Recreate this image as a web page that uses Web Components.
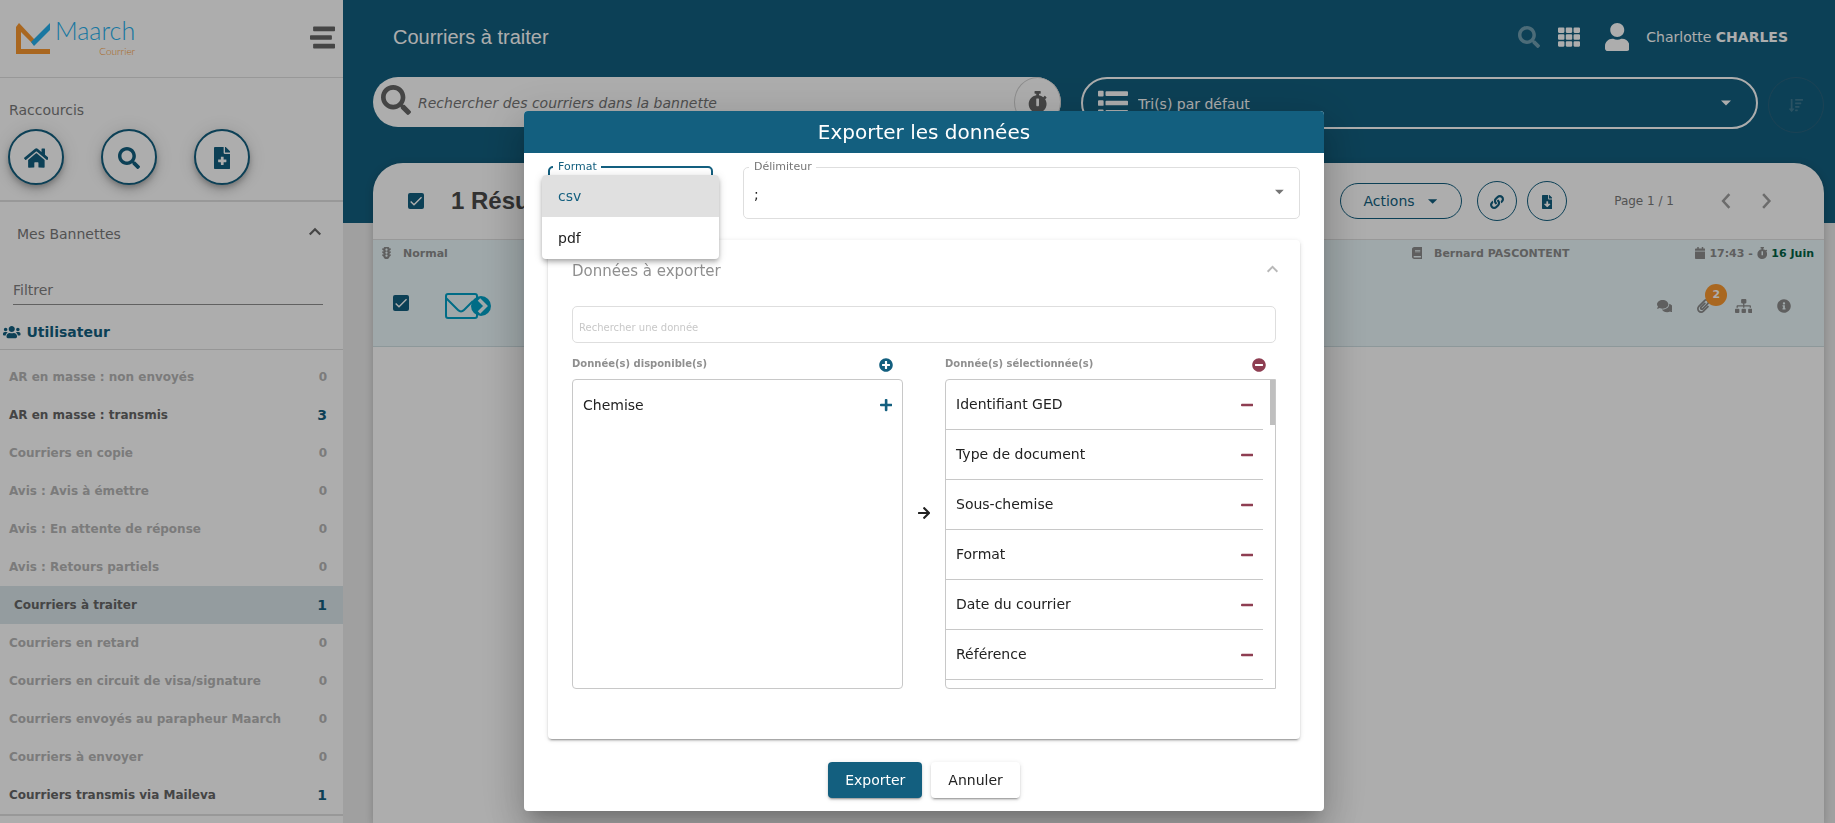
<!DOCTYPE html>
<html lang="fr">
<head>
<meta charset="utf-8">
<title>Maarch Courrier</title>
<style>
  html, body { margin: 0; height: 100%; }
  body { font-family: "DejaVu Sans", sans-serif; font-size: 14px; color: #666; overflow: hidden;
    --primary: #135f7f; --accent: #f99830; --danger: #8e3e52; }
</style>
</head>
<body>
<mc-app></mc-app>
<script>
const define = (name, html, setup) => {
  const tpl = document.createElement('template');
  tpl.innerHTML = `<style>*{box-sizing:border-box}button,input,select{font:inherit;color:inherit;margin:0}button{cursor:pointer}</style>` + html;
  customElements.define(name, class extends HTMLElement {
    constructor() {
      super();
      this.attachShadow({ mode: 'open' }).append(tpl.content.cloneNode(true));
    }
    connectedCallback() { if (setup) setup.call(this, this.shadowRoot); }
  });
};

const FILE = 'M377 105L279.1 7c-4.5-4.5-10.6-7-17-7H256v128h128v-6.1c0-6.3-2.5-12.4-7-16.9zM224 136V0H24C10.7 0 0 10.7 0 24v464c0 13.3 10.7 24 24 24h336c13.3 0 24-10.7 24-24V160H248c-13.2 0-24-10.8-24-24z';
const ICONS = {
  search: [512, 'M505 442.7L405.3 343c-4.5-4.5-10.6-7-17-7H372c27.6-35.3 44-79.7 44-128C416 93.1 322.9 0 208 0S0 93.1 0 208s93.1 208 208 208c48.3 0 92.7-16.4 128-44v16.3c0 6.4 2.5 12.5 7 17l99.7 99.7c9.4 9.4 24.6 9.4 33.9 0l28.3-28.3c9.4-9.4 9.4-24.6.1-34zM208 336c-70.7 0-128-57.2-128-128 0-70.7 57.2-128 128-128 70.7 0 128 57.2 128 128 0 70.7-57.2 128-128 128z'],
  home: [576, 'M280.37 148.26L96 300.11V464a16 16 0 0 0 16 16l112.06-.29a16 16 0 0 0 15.92-16V368a16 16 0 0 1 16-16h64a16 16 0 0 1 16 16v95.64a16 16 0 0 0 16 16.05L464 480a16 16 0 0 0 16-16V300L295.67 148.26a12.19 12.19 0 0 0-15.3 0zM571.6 251.47L488 182.56V44.05a12 12 0 0 0-12-12h-56a12 12 0 0 0-12 12v72.61L318.47 43a48 48 0 0 0-61 0L4.34 251.47a12 12 0 0 0-1.6 16.9l25.5 31A12 12 0 0 0 45.15 301l235.22-193.74a12.19 12.19 0 0 1 15.3 0L530.9 301a12 12 0 0 0 16.9-1.6l25.5-31a12 12 0 0 0-1.7-16.93z'],
  filePlus: [384, FILE + 'M288 296v48c0 4.4-3.6 8-8 8h-56v56c0 4.4-3.6 8-8 8h-48c-4.4 0-8-3.6-8-8v-56h-56c-4.4 0-8-3.6-8-8v-48c0-4.4 3.6-8 8-8h56v-56c0-4.4 3.6-8 8-8h48c4.4 0 8 3.6 8 8v56h56c4.4 0 8 3.6 8 8z'],
  fileDown: [384, FILE + 'M300.45 347.36l-96.42 95.7c-6.65 6.61-17.39 6.61-24.04 0l-96.42-95.7C73.42 337.29 80.54 320 94.82 320H160v-80c0-8.84 7.16-16 16-16h32c8.84 0 16 7.16 16 16v80h65.18c14.28 0 21.4 17.29 11.27 27.36z'],
  users: [640, 'M96 224c35.3 0 64-28.7 64-64s-28.7-64-64-64-64 28.7-64 64 28.7 64 64 64zm448 0c35.3 0 64-28.7 64-64s-28.7-64-64-64-64 28.7-64 64 28.7 64 64 64zm32 32h-64c-17.6 0-33.5 7.1-45.1 18.6 40.3 22.1 68.9 62 75.1 109.4h66c17.7 0 32-14.3 32-32v-32c0-35.3-28.7-64-64-64zm-256 0c61.9 0 112-50.1 112-112S381.9 32 320 32 208 82.1 208 144s50.1 112 112 112zm76.8 32h-8.3c-20.8 10-43.9 16-68.5 16s-47.6-6-68.5-16h-8.3C179.6 288 128 339.6 128 403.2V432c0 26.5 21.5 48 48 48h288c26.5 0 48-21.5 48-48v-28.8c0-63.6-51.6-115.2-115.2-115.2zm-223.7-13.4C161.5 263.1 145.6 256 128 256H64c-35.3 0-64 28.7-64 64v32c0 17.7 14.3 32 32 32h65.9c6.3-47.4 34.9-87.3 75.2-109.4z'],
  user: [448, 'M224 256c70.7 0 128-57.3 128-128S294.7 0 224 0 96 57.3 96 128s57.3 128 128 128zm89.6 32h-16.7c-22.2 10.2-46.9 16-72.9 16s-50.6-5.8-72.9-16h-16.7C60.2 288 0 348.2 0 422.4V464c0 26.5 21.5 48 48 48h352c26.5 0 48-21.5 48-48v-41.6c0-74.2-60.2-134.4-134.4-134.4z'],
  stopwatch: [448, 'M432 304c0 114.9-93.1 208-208 208S16 418.9 16 304c0-104 76.3-190.2 176-205.5V64h-28c-6.6 0-12-5.4-12-12V12c0-6.6 5.4-12 12-12h120c6.6 0 12 5.4 12 12v40c0 6.6-5.4 12-12 12h-28v34.5c37.5 5.8 71.7 21.6 99.7 44.6l27.5-27.5c4.7-4.7 12.3-4.7 17 0l28.3 28.3c4.7 4.7 4.7 12.3 0 17l-29.4 29.4-.6.6C419.7 223.3 432 262.2 432 304zm-176 36V188.5c0-6.6-5.4-12-12-12h-40c-6.6 0-12 5.4-12 12V340c0 6.6 5.4 12 12 12h40c6.6 0 12-5.4 12-12z'],
  link: [512, 'M326.612 185.391c59.747 59.809 58.927 155.698.36 214.59-.11.12-.24.25-.36.37l-67.2 67.2c-59.27 59.27-155.699 59.262-214.96 0-59.27-59.26-59.27-155.7 0-214.96l37.106-37.106c9.84-9.84 26.786-3.3 27.294 10.606.648 17.722 3.826 35.527 9.69 52.721 1.986 5.822.567 12.262-3.783 16.612l-13.087 13.087c-28.026 28.026-28.905 73.66-1.155 101.96 28.024 28.579 74.086 28.749 102.325.51l67.2-67.19c28.191-28.191 28.073-73.757 0-101.83-3.701-3.694-7.429-6.564-10.341-8.569a16.037 16.037 0 0 1-6.947-12.606c-.396-10.567 3.348-21.456 11.698-29.806l21.054-21.055c5.521-5.521 14.182-6.199 20.584-1.731a152.482 152.482 0 0 1 20.522 17.197zM467.547 44.449c-59.261-59.262-155.69-59.27-214.96 0l-67.2 67.2c-.12.12-.25.25-.36.37-58.566 58.892-59.387 154.781.36 214.59a152.454 152.454 0 0 0 20.521 17.196c6.402 4.468 15.064 3.789 20.584-1.731l21.054-21.055c8.35-8.35 12.094-19.239 11.698-29.806a16.037 16.037 0 0 0-6.947-12.606c-2.912-2.005-6.64-4.875-10.341-8.569-28.073-28.073-28.191-73.639 0-101.83l67.2-67.19c28.239-28.239 74.3-28.069 102.325.51 27.75 28.3 26.872 73.934-1.155 101.96l-13.087 13.087c-4.35 4.35-5.769 10.79-3.783 16.612 5.864 17.194 9.042 34.999 9.69 52.721.509 13.906 17.454 20.446 27.294 10.606l37.106-37.106c59.271-59.259 59.271-155.699.001-214.959z'],
  comments: [576, 'M416 192c0-88.4-93.1-160-208-160S0 103.6 0 192c0 34.3 14.1 65.9 38 92-13.4 30.2-35.5 54.2-35.8 54.5-2.2 2.3-2.8 5.7-1.5 8.7S4.8 352 8 352c36.6 0 66.9-12.3 88.7-25 32.2 15.7 70.3 25 111.3 25 114.9 0 208-71.6 208-160zm122 220c23.9-26 38-57.7 38-92 0-66.9-53.5-124.2-129.3-148.1.9 6.6 1.3 13.3 1.3 20.1 0 105.9-107.7 192-240 192-10.8 0-21.3-.8-31.7-1.9C207.8 439.6 281.8 480 368 480c41 0 79.1-9.2 111.3-25 21.8 12.7 52.1 25 88.7 25 3.2 0 6.1-1.9 7.3-4.8 1.3-2.9.7-6.3-1.5-8.7-.3-.3-22.4-24.2-35.8-54.5z'],
  clip: [448, 'M43.246 466.142c-58.43-60.289-57.341-157.511 1.386-217.581L254.392 34c44.316-45.332 116.351-45.336 160.671 0 43.89 44.894 43.943 117.329 0 162.276L232.214 383.128c-29.855 30.537-78.633 30.111-107.982-.998-28.275-29.97-27.368-77.473 1.452-106.953l143.743-146.835c6.182-6.314 16.312-6.422 22.626-.241l22.861 22.379c6.315 6.182 6.422 16.312.241 22.626L171.427 319.927c-4.932 5.045-5.236 13.428-.648 18.292 4.372 4.634 11.245 4.711 15.688.165l182.849-186.851c19.613-20.062 19.613-52.725-.011-72.798-19.189-19.627-49.957-19.637-69.154 0L90.39 293.295c-34.763 35.56-35.299 93.12-1.191 128.313 34.01 35.093 88.985 35.137 123.058.286l172.06-175.999c6.177-6.319 16.307-6.433 22.626-.256l22.877 22.364c6.319 6.177 6.434 16.307.256 22.626l-172.06 175.998c-59.576 60.938-155.943 60.216-214.77-.485z'],
  sitemap: [640, 'M128 352H32c-17.67 0-32 14.33-32 32v96c0 17.67 14.33 32 32 32h96c17.67 0 32-14.33 32-32v-96c0-17.67-14.33-32-32-32zm-24-80h192v48h48v-48h192v48h48v-57.59c0-21.17-17.23-38.41-38.41-38.41H344v-64h40c17.67 0 32-14.33 32-32V32c0-17.67-14.33-32-32-32H256c-17.67 0-32 14.33-32 32v96c0 17.67 14.33 32 32 32h40v64H94.41C73.23 224 56 241.23 56 262.41V320h48v-48zm264 80h-96c-17.67 0-32 14.33-32 32v96c0 17.67 14.33 32 32 32h96c17.67 0 32-14.33 32-32v-96c0-17.67-14.33-32-32-32zm240 0h-96c-17.67 0-32 14.33-32 32v96c0 17.67 14.33 32 32 32h96c17.67 0 32-14.33 32-32v-96c0-17.67-14.33-32-32-32z'],
  info: [512, 'M256 8C119.043 8 8 119.083 8 256c0 136.997 111.043 248 248 248s248-111.003 248-248C504 119.083 392.957 8 256 8zm0 110c23.196 0 42 18.804 42 42s-18.804 42-42 42-42-18.804-42-42 18.804-42 42-42zm56 254c0 6.627-5.373 12-12 12h-88c-6.627 0-12-5.373-12-12v-24c0-6.627 5.373-12 12-12h12v-64h-12c-6.627 0-12-5.373-12-12v-24c0-6.627 5.373-12 12-12h64c6.627 0 12 5.373 12 12v100h12c6.627 0 12 5.373 12 12v24z'],
  plusCircle: [512, 'M256 8C119 8 8 119 8 256s111 248 248 248 248-111 248-248S393 8 256 8zm144 276c0 6.6-5.4 12-12 12h-92v92c0 6.6-5.4 12-12 12h-56c-6.6 0-12-5.4-12-12v-92h-92c-6.6 0-12-5.4-12-12v-56c0-6.6 5.4-12 12-12h92v-92c0-6.6 5.4-12 12-12h56c6.6 0 12 5.4 12 12v92h92c6.6 0 12 5.4 12 12v56z'],
  minusCircle: [512, 'M256 8C119 8 8 119 8 256s111 248 248 248 248-111 248-248S393 8 256 8zM124 296c-6.6 0-12-5.4-12-12v-56c0-6.6 5.4-12 12-12h264c6.6 0 12 5.4 12 12v56c0 6.6-5.4 12-12 12H124z'],
  plus: [448, 'M416 208H272V64c0-17.67-14.33-32-32-32h-32c-17.67 0-32 14.33-32 32v144H32c-17.67 0-32 14.33-32 32v32c0 17.67 14.33 32 32 32h144v144c0 17.67 14.33 32 32 32h32c17.67 0 32-14.33 32-32V304h144c17.67 0 32-14.33 32-32v-32c0-17.67-14.33-32-32-32z'],
  minus: [448, 'M416 208H32c-17.67 0-32 14.33-32 32v32c0 17.67 14.33 32 32 32h384c17.67 0 32-14.33 32-32v-32c0-17.67-14.33-32-32-32z'],
  arrow: [448, 'M190.5 66.9l22.2-22.2c9.4-9.4 24.6-9.4 33.9 0L441 239c9.4 9.4 9.4 24.6 0 33.9L246.6 467.3c-9.4 9.4-24.6 9.4-33.9 0l-22.2-22.2c-9.5-9.5-9.3-25 .4-34.3L311.4 296H24c-13.3 0-24-10.7-24-24v-32c0-13.3 10.7-24 24-24h287.4L190.9 101.2c-9.8-9.3-10-24.8-.4-34.3z'],
  calendar: [448, 'M12 192h424c6.6 0 12 5.4 12 12v260c0 26.5-21.5 48-48 48H48c-26.5 0-48-21.5-48-48V204c0-6.6 5.4-12 12-12zm436-44v-36c0-26.5-21.5-48-48-48h-48V12c0-6.6-5.4-12-12-12h-40c-6.6 0-12 5.4-12 12v52H160V12c0-6.6-5.4-12-12-12h-40c-6.6 0-12 5.4-12 12v52H48C21.5 64 0 85.5 0 112v36c0 6.6 5.4 12 12 12h424c6.6 0 12-5.4 12-12z'],
  book: [448, 'M448 360V24c0-13.3-10.7-24-24-24H96C43 0 0 43 0 96v320c0 53 43 96 96 96h328c13.3 0 24-10.7 24-24v-16c0-7.5-3.5-14.3-8.9-18.7-4.2-15.4-4.2-59.3 0-74.7 5.4-4.3 8.9-11.1 8.9-18.6zM128 134c0-3.3 2.7-6 6-6h212c3.3 0 6 2.7 6 6v20c0 3.3-2.7 6-6 6H134c-3.3 0-6-2.7-6-6v-20zm0 64c0-3.3 2.7-6 6-6h212c3.3 0 6 2.7 6 6v20c0 3.3-2.7 6-6 6H134c-3.3 0-6-2.7-6-6v-20zm253.4 250H96c-17.7 0-32-14.3-32-32 0-17.6 14.4-32 32-32h285.4c-1.9 17.1-1.9 46.9 0 64z'],
  traffic: [384, 'M384 192h-64v-37.9c37.2-13.2 64-48.4 64-90.1h-64c0-35.3-28.7-64-64-64H128C92.7 0 64 28.7 64 64H0c0 41.7 26.8 76.9 64 90.1V192H0c0 41.7 26.8 76.9 64 90.1V320H0c0 42.8 28.2 78.6 66.8 91.1C72.7 467.8 120.4 512 192 512s119.3-44.2 125.2-100.9C355.8 398.6 384 362.8 384 320h-64v-37.9c37.2-13.2 64-48.4 64-90.1zM192 416c-26.5 0-48-21.5-48-48s21.5-48 48-48 48 21.5 48 48-21.5 48-48 48zm0-128c-26.5 0-48-21.5-48-48s21.5-48 48-48 48 21.5 48 48-21.5 48-48 48zm0-128c-26.5 0-48-21.5-48-48s21.5-48 48-48 48 21.5 48 48-21.5 48-48 48z'],
  grid: [512, 'M24 32h102a24 24 0 0 1 24 24v80a24 24 0 0 1-24 24H24A24 24 0 0 1 0 136V56a24 24 0 0 1 24-24zM205 32h102a24 24 0 0 1 24 24v80a24 24 0 0 1-24 24H205a24 24 0 0 1-24-24V56a24 24 0 0 1 24-24zM386 32h102a24 24 0 0 1 24 24v80a24 24 0 0 1-24 24H386a24 24 0 0 1-24-24V56a24 24 0 0 1 24-24zM24 192h102a24 24 0 0 1 24 24v80a24 24 0 0 1-24 24H24a24 24 0 0 1-24-24v-80a24 24 0 0 1 24-24zM205 192h102a24 24 0 0 1 24 24v80a24 24 0 0 1-24 24H205a24 24 0 0 1-24-24v-80a24 24 0 0 1 24-24zM386 192h102a24 24 0 0 1 24 24v80a24 24 0 0 1-24 24H386a24 24 0 0 1-24-24v-80a24 24 0 0 1 24-24zM24 352h102a24 24 0 0 1 24 24v80a24 24 0 0 1-24 24H24a24 24 0 0 1-24-24v-80a24 24 0 0 1 24-24zM205 352h102a24 24 0 0 1 24 24v80a24 24 0 0 1-24 24H205a24 24 0 0 1-24-24v-80a24 24 0 0 1 24-24zM386 352h102a24 24 0 0 1 24 24v80a24 24 0 0 1-24 24H386a24 24 0 0 1-24-24v-80a24 24 0 0 1 24-24z'],
  list: [512, 'M16 48h64a16 16 0 0 1 16 16v64a16 16 0 0 1-16 16H16a16 16 0 0 1-16-16V64a16 16 0 0 1 16-16zM16 208h64a16 16 0 0 1 16 16v64a16 16 0 0 1-16 16H16a16 16 0 0 1-16-16v-64a16 16 0 0 1 16-16zM16 368h64a16 16 0 0 1 16 16v64a16 16 0 0 1-16 16H16a16 16 0 0 1-16-16v-64a16 16 0 0 1 16-16zM144 56h352a16 16 0 0 1 16 16v48a16 16 0 0 1-16 16H144a16 16 0 0 1-16-16V72a16 16 0 0 1 16-16zM144 216h352a16 16 0 0 1 16 16v48a16 16 0 0 1-16 16H144a16 16 0 0 1-16-16v-48a16 16 0 0 1 16-16zM144 376h352a16 16 0 0 1 16 16v48a16 16 0 0 1-16 16H144a16 16 0 0 1-16-16v-48a16 16 0 0 1 16-16z'],
  stream: [512, 'M80 32h416a16 16 0 0 1 16 16v64a16 16 0 0 1-16 16H80a16 16 0 0 1-16-16V48a16 16 0 0 1 16-16zM16 208h416a16 16 0 0 1 16 16v64a16 16 0 0 1-16 16H16a16 16 0 0 1-16-16v-64a16 16 0 0 1 16-16zM80 384h416a16 16 0 0 1 16 16v64a16 16 0 0 1-16 16H80a16 16 0 0 1-16-16v-64a16 16 0 0 1 16-16z'],
  sortDown: [512, 'M240 32h256a16 16 0 0 1 16 16v32a16 16 0 0 1-16 16H240a16 16 0 0 1-16-16V48a16 16 0 0 1 16-16zM240 160h192a16 16 0 0 1 16 16v32a16 16 0 0 1-16 16H240a16 16 0 0 1-16-16v-32a16 16 0 0 1 16-16zM240 288h128a16 16 0 0 1 16 16v32a16 16 0 0 1-16 16H240a16 16 0 0 1-16-16v-32a16 16 0 0 1 16-16zM240 416h64a16 16 0 0 1 16 16v32a16 16 0 0 1-16 16h-64a16 16 0 0 1-16-16v-32a16 16 0 0 1 16-16zM16 384h48V48a16 16 0 0 1 16-16h32a16 16 0 0 1 16 16v336h48c14.2 0 21.4 17.2 11.3 27.3l-80 96a16 16 0 0 1-22.6 0l-80-96C-5.3 401.2 1.8 384 16 384z'],
  up: [512, 'M64 384l192-192 192 192', 1],
  left: [320, 'M240 80L80 256l160 176', 1],
  right: [320, 'M80 80l160 176L80 432', 1],
  caret: [320, 'M0 176h320L160 336z']
};
define('mc-icon', `<style>:host{display:inline-flex;flex:none;line-height:0}svg{display:block;height:var(--s);width:auto;fill:currentColor}
  svg.line{fill:none;stroke:currentColor;stroke-width:var(--w,64px)}</style><span></span>`, function (r) {
  const [w, d, line] = ICONS[this.getAttribute('name')];
  this.style.setProperty('--s', this.getAttribute('size') + 'px');
  r.querySelector('span').innerHTML = `<svg aria-hidden="true" viewBox="0 0 ${w} 512"${line ? ' class="line"' : ''}><path d="${d}"/></svg>`;
});

define('mc-logo', `<style>:host{display:flex;align-items:flex-start;gap:4px}
  .words{display:flex;flex-direction:column;align-items:flex-end;font-family:Lato,sans-serif;font-weight:300}
  .a{font-size:25px;line-height:30px;color:#26b0ee}.b{font-size:10px;line-height:12px;color:var(--accent)}
  svg{margin-top:8px}</style>
  <svg width="35" height="31" viewBox="0 0 35 31" aria-hidden="true">
    <path fill="#f99830" d="M0 4L3 0 18 16V22L17 21 5 9V26H34V31H0z"/><path fill="#26b0ee" d="M34 0V7L18 23 15 19z"/></svg>
  <div class="words"><span class="a">Maarch</span><span class="b">Courrier</span></div>`);

define('mc-round', `<style>:host{display:block;flex:none;color:var(--primary)}
  button{display:flex;align-items:center;justify-content:center;width:56px;height:56px;border-radius:50%;border:2px solid currentColor;background:#fff;padding:2px 0 0;box-shadow:0 3px 5px -1px rgba(0,0,0,.2),0 6px 10px rgba(0,0,0,.14),0 1px 18px rgba(0,0,0,.12)}
  :host([small]) button{width:40px;height:40px;border-width:1px;box-shadow:none}
  </style><button type="button"><slot></slot></button>`, function (r) { r.querySelector('button').setAttribute('aria-label', this.getAttribute('label')); });

define('mc-basket', `<style>:host{display:flex;align-items:center;justify-content:space-between;height:38px;padding:0 16px 0 9px;font-weight:700;font-size:12px;color:#b6b6b6}
  :host([full]){color:#666}:host([active]){background:#dae6ea;padding-left:14px}
  a{color:inherit;text-decoration:none}b{color:inherit}:host([full]) b{color:var(--primary);font-size:14px}</style>
  <a href="#"><slot></slot></a><b></b>`, function (r) { r.querySelector('b').textContent = this.getAttribute('count'); });

define('mc-sidebar', `<style>
  :host{display:block;width:343px;flex:none;background:#fff}
  header{display:flex;justify-content:space-between;align-items:flex-start;height:78px;padding:15px 8px 0 16px;border-bottom:1px solid #e0e0e0}
  header button{border:0;background:none;padding:10px 0 0;color:#666}
  .short{height:124px;border-bottom:2px solid #e0e0e0;padding:23px 8px 0}
  h2{font-weight:400;font-size:14px;line-height:18px;margin:0;color:#7a7a7a}
  .short h2{padding-left:1px}
  .btns{display:flex;gap:37px;padding-top:10px}
  .head{display:flex;justify-content:space-between;align-items:center;padding:0 21px 0 17px;height:64px}
  .head button{border:0;background:none;padding:0;margin-bottom:4px}
  .filter{margin:0 20px 0 13px;height:39px;border-bottom:1px solid #8f8f8f}
  .filter input{width:100%;height:30px;margin-top:9px;border:0;outline:0;padding:0;background:none}
  .filter input::placeholder{color:#808080;opacity:1}
  .group{display:flex;align-items:center;gap:6px;height:45px;padding:10px 3px 0;border-bottom:1px solid #dedede;color:var(--primary);font-weight:700}
  nav{padding-top:8px;border-bottom:2px solid #e0e0e0}
  </style>
  <header><mc-logo></mc-logo><button type="button" aria-label="Menu"><mc-icon name="stream" size="25"></mc-icon></button></header>
  <section class="short"><h2>Raccourcis</h2><div class="btns">
    <mc-round label="Accueil"><mc-icon name="home" size="22"></mc-icon></mc-round>
    <mc-round label="Recherche"><mc-icon name="search" size="22"></mc-icon></mc-round>
    <mc-round label="Nouveau courrier"><mc-icon name="filePlus" size="22"></mc-icon></mc-round></div></section>
  <div class="head"><h2>Mes Bannettes</h2><button type="button" aria-label="Replier"><mc-icon name="up" size="14" style="--w:80px"></mc-icon></button></div>
  <div class="filter"><input type="text" placeholder="Filtrer" aria-label="Filtrer"></div>
  <div class="group"><mc-icon name="users" size="14"></mc-icon><span>Utilisateur</span></div>
  <nav>
    <mc-basket count="0">AR en masse : non envoyés</mc-basket>
    <mc-basket count="3" full>AR en masse : transmis</mc-basket>
    <mc-basket count="0">Courriers en copie</mc-basket>
    <mc-basket count="0">Avis : Avis à émettre</mc-basket>
    <mc-basket count="0">Avis : En attente de réponse</mc-basket>
    <mc-basket count="0">Avis : Retours partiels</mc-basket>
    <mc-basket count="1" full active>Courriers à traiter</mc-basket>
    <mc-basket count="0">Courriers en retard</mc-basket>
    <mc-basket count="0">Courriers en circuit de visa/signature</mc-basket>
    <mc-basket count="0">Courriers envoyés au parapheur Maarch</mc-basket>
    <mc-basket count="0">Courriers à envoyer</mc-basket>
    <mc-basket count="1" full>Courriers transmis via Maileva</mc-basket>
  </nav>`);

define('mc-topbar', `<style>
  :host{display:block;color:#fff}
  .bar{display:flex;align-items:center;height:77px;padding:0 47px 4px 50px}
  h1{flex:1;margin:0;font:400 20px/26px "Liberation Sans",sans-serif}
  .tools{display:flex;align-items:center}
  button{border:0;background:none;padding:0;display:flex}
  .tools button:nth-child(1){opacity:.4;margin-right:18px}.tools button:nth-child(2){margin-right:25px}
  .user{display:flex;align-items:center;gap:17px}
  .find{display:flex;gap:20px;padding:0 11px 0 30px;align-items:flex-start}
  .search{display:flex;flex:1;height:50px;border-radius:25px;background:#fff;color:#666;padding-left:8px;overflow:hidden}
  .search mc-icon{margin-top:8px}
  .search input{flex:1;min-width:0;border:0;outline:0;background:none;font-style:italic;padding:2px 7px 0}
  .search input::placeholder{color:#757575;opacity:1}
  .search button{width:47px;align-items:center;justify-content:center;border:1px solid #d0d0d0;border-radius:50%;background:#fff}
  .search button mc-icon{margin:0}
  .sort{width:677px;height:52px;display:flex;align-items:center;border:2px solid #fff;border-radius:26px;padding:0 25px 0 15px;gap:10px}
  select{flex:1;appearance:none;background:none;border:0;outline:0;padding:2px 0 0;height:40px}
  .off{width:56px;height:56px;border-radius:50%;border:1px solid #2a637e;align-items:center;justify-content:center;margin-left:-10px;color:#3f7a93}
  </style>
  <div class="bar"><h1>Courriers à traiter</h1><div class="tools">
    <button type="button" aria-label="Recherche"><mc-icon name="search" size="22"></mc-icon></button>
    <button type="button" aria-label="Applications"><mc-icon name="grid" size="22"></mc-icon></button>
    <span class="user"><mc-icon name="user" size="28"></mc-icon><span>Charlotte <b>CHARLES</b></span></span></div></div>
  <div class="find"><div class="search"><mc-icon name="search" size="30"></mc-icon>
    <input type="text" placeholder="Rechercher des courriers dans la bannette" aria-label="Rechercher des courriers dans la bannette">
    <button type="button" aria-label="Historique"><mc-icon name="stopwatch" size="22"></mc-icon></button></div>
    <div class="sort"><mc-icon name="list" size="30"></mc-icon><select aria-label="Tri"><option>Tri(s) par défaut</option></select><mc-icon name="caret" size="16"></mc-icon></div>
    <button class="off" type="button" disabled aria-label="Ordre de tri"><mc-icon name="sortDown" size="14"></mc-icon></button></div>`);

define('mc-check', `<style>:host{display:block;width:16px;height:16px;flex:none;position:relative}
  input{appearance:none;display:block;width:16px;height:16px;border-radius:2px;background:var(--primary)}
  svg{position:absolute;inset:0;pointer-events:none}</style>
  <input type="checkbox" checked><svg viewBox="0 0 24 24" aria-hidden="true"><path d="M4 12.7L9 17.7 20.3 6.3" fill="none" stroke="#fff" stroke-width="2.1"/></svg>`,
  function (r) { r.querySelector('input').setAttribute('aria-label', this.getAttribute('label')); });

define('mc-results', `<style>
  :host{display:flex;flex-direction:column;flex:1;background:#fff;border-radius:30px 30px 0 0;margin:0 11px 0 30px;box-shadow:0 2px 8px rgba(0,0,0,.2);overflow:hidden}
  .top{display:flex;align-items:center;height:77px;padding:0 52px 0 35px;border-bottom:1px solid #e0e0e0}
  h2{flex:1;margin:0 0 0 27px;font:700 24px/30px "Liberation Sans",sans-serif;color:#4a4a4a}
  .act{display:flex;align-items:center;justify-content:center;gap:13px;width:122px;height:36px;border-radius:18px;border:1px solid var(--primary);background:none;color:var(--primary);padding:0 2px 0 0;margin-right:15px}
  mc-round{margin-right:10px}.page{font-size:12px;margin:0 46px 0 37px;color:#7a7a7a}
  .nav{border:0;background:none;padding:0;color:#a0a0a0;display:flex}.nav + .nav{margin-left:27px}
  .row{height:107px;background:#ebf8fb;border-bottom:1px solid #d0e0e4;font-size:11px;font-weight:700;color:#8c8c8c}
  .meta{display:flex;align-items:center;height:26px;padding:0 10px 0 9px}
  .meta .who{display:flex;align-items:center;gap:12px}
  .meta .who:first-child{flex:1028}
  .meta .who:nth-child(2){flex:283}
  .date{display:flex;align-items:center;gap:4px}.date b{color:#006244}
  .body{display:flex;align-items:center;padding:0 33px 0 20px;height:74px}
  .mail{margin-left:36px;flex:1;padding-top:6px}.mail svg{display:block}
  .icons{display:flex;align-items:center;gap:25px;padding-top:5px}
  .icons button{position:relative;border:0;background:none;padding:0;display:flex}
  .badge{position:absolute;left:8px;bottom:7px;width:22px;height:22px;border-radius:50%;background:var(--accent);color:#fff;font-size:11px;line-height:22px;text-align:center}
  </style>
  <div class="top"><mc-check label="Tout sélectionner"></mc-check><h2>1 Résultat</h2>
    <button class="act" type="button"><span>Actions</span><mc-icon name="caret" size="15"></mc-icon></button>
    <mc-round small label="Lien"><mc-icon name="link" size="14"></mc-icon></mc-round><mc-round small label="Exporter"><mc-icon name="fileDown" size="14"></mc-icon></mc-round>
    <span class="page">Page 1 / 1</span>
    <button class="nav" type="button" aria-label="Précédent"><mc-icon name="left" size="20"></mc-icon></button><button class="nav" type="button" aria-label="Suivant"><mc-icon name="right" size="20"></mc-icon></button></div>
  <div class="row"><div class="meta"><span class="who"><mc-icon name="traffic" size="12"></mc-icon><span>Normal</span></span>
    <span class="who"><mc-icon name="book" size="12"></mc-icon><span>Bernard PASCONTENT</span></span>
    <span class="date"><mc-icon name="calendar" size="12"></mc-icon><span>17:43 -</span><mc-icon name="stopwatch" size="12"></mc-icon><b>16 Juin</b></span></div>
    <div class="body"><mc-check label="Sélectionner le courrier"></mc-check>
      <div class="mail"><svg width="47" height="27" viewBox="0 0 47 27" aria-hidden="true"><rect x="1" y="1" width="31" height="24" rx="2" fill="none" stroke="#00a0c6" stroke-width="2"/><path d="M1 5L13 17Q16 20 19 17L28 8" fill="none" stroke="#00a0c6" stroke-width="2"/><circle cx="36" cy="13" r="10" fill="#00a0c6"/><path d="M34 6.5L40.5 13 34 19.5" fill="none" stroke="#ebf8fb" stroke-width="3.5"/></svg></div>
      <div class="icons"><button type="button" aria-label="Annotations"><mc-icon name="comments" size="14"></mc-icon></button><button type="button" aria-label="Pièces jointes"><mc-icon name="clip" size="14"></mc-icon><span class="badge">2</span></button><button type="button" aria-label="Circuit"><mc-icon name="sitemap" size="14"></mc-icon></button><button type="button" aria-label="Informations"><mc-icon name="info" size="14"></mc-icon></button></div></div></div>`);

define('mc-select', `<style>
  :host{display:block}
  fieldset{margin:0;border:1px solid #dedede;border-radius:5px;height:60px;padding:0 15px 0 10px;min-width:0}
  :host([open]) fieldset{border:2px solid var(--primary);padding-left:8px}
  legend{padding:0 4px 0 5px;margin-left:-5px;font-size:11px;line-height:16px;color:#757575}
  :host([open]) legend{color:var(--primary)}
  .in{display:flex;align-items:center;height:34px;color:#222}
  .in mc-icon{color:#757575}
  select{flex:1;min-width:0;appearance:none;border:0;outline:0;background:none;padding:4px 0 0;height:30px}
  </style><fieldset><legend><label for="s"></label></legend><div class="in"><select id="s"></select><mc-icon name="caret" size="14"></mc-icon></div></fieldset>`,
  function (r) {
    r.querySelector('label').textContent = this.getAttribute('label');
    // While the menu is open, the menu alone shows the value.
    const value = this.getAttribute('value');
    r.querySelector('select').append(new Option(this.hasAttribute('open') ? '' : value, value));
  });

define('mc-field-row', `<style>:host{display:flex;align-items:center;justify-content:space-between;height:50px;padding:0 10px 0 10px;color:#222}
  :host([remove]){border-bottom:1px solid #c8c8c8}:host([remove]) span{padding-bottom:2px}
  button{border:0;background:none;padding:0;display:flex;color:var(--primary)}:host([remove]) button{color:var(--danger)}</style>
  <span><slot></slot></span><button type="button"></button>`, function (r) {
  const rm = this.hasAttribute('remove');
  const b = r.querySelector('button');
  b.setAttribute('aria-label', rm ? 'Retirer' : 'Ajouter');
  b.innerHTML = `<mc-icon name="${rm ? 'minus' : 'plus'}" size="14"></mc-icon>`;
});

define('mc-data-list', `<style>
  :host{display:block;flex:1;min-width:0;color:var(--primary)}
  :host([remove]){color:var(--danger)}
  header{display:flex;justify-content:space-between;align-items:center;height:29px;padding:0 10px 0 0;font-size:10px;font-weight:700}
  header span{color:#8f8f8f;padding-bottom:2px}
  button{border:0;background:none;padding:0;display:flex}
  .box{position:relative;height:310px;overflow:hidden;border:1px solid #c8c8c8;border-radius:4px}
  :host([remove]) .box{padding-right:12px;border-radius:4px 0 0 4px}
  i{display:none}:host([remove]) i{display:block;position:absolute;top:0;right:0;width:5px;height:45px;background:#bfbfbf}
  </style><header><span></span><button type="button"><mc-icon name="plusCircle" size="14"></mc-icon></button></header><div class="box"><slot></slot><i></i></div>`,
  function (r) {
    const rm = this.hasAttribute('remove');
    r.querySelector('header span').textContent = this.getAttribute('label');
    const b = r.querySelector('button');
    b.setAttribute('aria-label', rm ? 'Tout retirer' : 'Tout ajouter');
    if (rm) b.innerHTML = '<mc-icon name="minusCircle" size="14"></mc-icon>';
  });

define('mc-dialog', `<style>
  :host{position:fixed;inset:0;display:flex;justify-content:center;align-items:flex-end;padding:0 0 12px 13px;background:rgba(0,0,0,.32)}
  section{width:800px;border-radius:4px;background:#fff;box-shadow:0 11px 15px -7px rgba(0,0,0,.2),0 24px 38px 3px rgba(0,0,0,.14),0 9px 46px 8px rgba(0,0,0,.12)}
  h2{margin:0;height:42px;line-height:42px;background:var(--primary);color:#fff;text-align:center;font-size:20px;font-weight:400;border-radius:4px 4px 0 0}
  .body{padding:6px 24px 0}
  .fields{display:flex;gap:30px;position:relative}
  .fields mc-select:nth-child(1){width:165px}.fields mc-select:nth-child(2){flex:1}
  .menu{position:absolute;left:-6px;top:16px;width:177px;margin:0;padding:0;list-style:none;border-radius:4px;overflow:hidden;background:#fff;box-shadow:0 2px 4px -1px rgba(0,0,0,.2),0 4px 5px rgba(0,0,0,.14),0 1px 10px rgba(0,0,0,.12);color:#222}
  .menu li{height:42px;line-height:42px;padding:0 16px}
  .menu li[aria-selected=true]{background:#e0e0e0;color:var(--primary)}
  .panel{margin-top:21px;padding:0 24px 50px;border-radius:4px;box-shadow:0 3px 1px -2px rgba(0,0,0,.2),0 2px 2px rgba(0,0,0,.14),0 1px 5px rgba(0,0,0,.12)}
  .head{display:flex;align-items:center;justify-content:space-between;height:66px;padding-bottom:4px;color:#8f8f8f}
  .head h3{margin:0;font-size:15px;font-weight:400}
  .head button{border:0;background:none;padding:0 0 5px;margin:0 -3px 0 0;display:flex;color:#b8b8b8}
  .q{display:block;width:100%;height:37px;border:1px solid #dedede;border-radius:5px;outline:0;padding:5px 6px 0;font-size:10px;background:none}
  .q::placeholder{color:#c8c8c8;opacity:1}
  .lists{display:flex;margin-top:7px}
  .lists > mc-icon{width:42px;justify-content:center;padding-top:156px;color:#222}
  footer{display:flex;justify-content:center;gap:9px;padding:23px 0 13px}
  footer button{height:36px;border:0;border-radius:4px;padding:0 17px;background:#fff;color:#222;box-shadow:0 3px 1px -2px rgba(0,0,0,.2),0 2px 2px rgba(0,0,0,.14),0 1px 5px rgba(0,0,0,.12)}
  footer .go{background:var(--primary);color:#fff}
  </style>
  <section role="dialog" aria-modal="true" aria-labelledby="t"><h2 id="t">Exporter les données</h2><div class="body">
    <div class="fields"><mc-select open label="Format" value="csv"></mc-select><mc-select label="Délimiteur" value=";"></mc-select>
      <ul class="menu" role="listbox" aria-label="Format"><li role="option" aria-selected="true">csv</li><li role="option">pdf</li></ul></div>
    <div class="panel"><div class="head"><h3>Données à exporter</h3><button type="button" aria-label="Replier"><mc-icon name="up" size="13" style="--w:72px"></mc-icon></button></div>
      <input class="q" type="text" placeholder="Rechercher une donnée" aria-label="Rechercher une donnée">
      <div class="lists"><mc-data-list label="Donnée(s) disponible(s)"><mc-field-row>Chemise</mc-field-row></mc-data-list>
        <mc-icon name="arrow" size="14"></mc-icon>
        <mc-data-list remove label="Donnée(s) sélectionnée(s)"><mc-field-row remove>Identifiant GED</mc-field-row><mc-field-row remove>Type de document</mc-field-row><mc-field-row remove>Sous-chemise</mc-field-row><mc-field-row remove>Format</mc-field-row><mc-field-row remove>Date du courrier</mc-field-row><mc-field-row remove>Référence</mc-field-row></mc-data-list></div></div>
    <footer><button class="go" type="button">Exporter</button><button type="button">Annuler</button></footer></div></section>`);

define('mc-app', `<style>
  :host{display:flex;height:100vh;background:#ececec}
  main{flex:1;min-width:0;display:flex;flex-direction:column;background:linear-gradient(var(--primary) 223px,#ececec 223px)}
  mc-topbar{height:163px;flex:none}
  </style><mc-sidebar></mc-sidebar><main><mc-topbar></mc-topbar><mc-results></mc-results></main><mc-dialog></mc-dialog>`);
</script>
</body>
</html>
